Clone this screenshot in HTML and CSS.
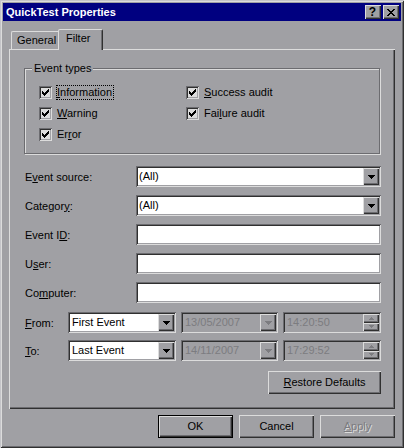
FILE: index.html
```html
<!DOCTYPE html>
<html>
<head>
<meta charset="utf-8">
<title>QuickTest Properties</title>
<link rel="stylesheet" href="styles.css">
</head>
<body>
<div class="window">
  <div class="titlebar">
    <span class="title">QuickTest Properties</span>
    <div class="tb-btns">
      <span class="tbtn help">?</span>
      <span class="tbtn close"><svg width="8" height="7" viewBox="0 0 8 7" shape-rendering="crispEdges"><path d="M0 0h2v1h-2z M6 0h2v1h-2z M1 1h2v1h-2z M5 1h2v1h-2z M2 2h4v1h-4z M3 3h2v1h-2z M2 4h4v1h-4z M1 5h2v1h-2z M5 5h2v1h-2z M0 6h2v1h-2z M6 6h2v1h-2z" fill="#000"/></svg></span>
    </div>
  </div>

  <div class="tabs">
    <div class="tab">General</div>
    <div class="tab active">Filter</div>
  </div>

  <div class="panel">
    <div class="group">
      <span class="legend">Event types</span>
      <div class="checks">
        <div class="chk"><span class="box"><svg width="7" height="7" viewBox="0 0 7 7" shape-rendering="crispEdges"><path d="M0 2h1v3h-1z M1 3h1v3h-1z M2 4h1v3h-1z M3 3h1v3h-1z M4 2h1v3h-1z M5 1h1v3h-1z M6 0h1v3h-1z" fill="#000"/></svg></span><span class="lbl focus"><u>I</u>nformation</span></div>
        <div class="chk"><span class="box"><svg width="7" height="7" viewBox="0 0 7 7" shape-rendering="crispEdges"><path d="M0 2h1v3h-1z M1 3h1v3h-1z M2 4h1v3h-1z M3 3h1v3h-1z M4 2h1v3h-1z M5 1h1v3h-1z M6 0h1v3h-1z" fill="#000"/></svg></span><span class="lbl"><u>S</u>uccess audit</span></div>
        <div class="chk"><span class="box"><svg width="7" height="7" viewBox="0 0 7 7" shape-rendering="crispEdges"><path d="M0 2h1v3h-1z M1 3h1v3h-1z M2 4h1v3h-1z M3 3h1v3h-1z M4 2h1v3h-1z M5 1h1v3h-1z M6 0h1v3h-1z" fill="#000"/></svg></span><span class="lbl"><u>W</u>arning</span></div>
        <div class="chk"><span class="box"><svg width="7" height="7" viewBox="0 0 7 7" shape-rendering="crispEdges"><path d="M0 2h1v3h-1z M1 3h1v3h-1z M2 4h1v3h-1z M3 3h1v3h-1z M4 2h1v3h-1z M5 1h1v3h-1z M6 0h1v3h-1z" fill="#000"/></svg></span><span class="lbl">Fai<u>l</u>ure audit</span></div>
        <div class="chk"><span class="box"><svg width="7" height="7" viewBox="0 0 7 7" shape-rendering="crispEdges"><path d="M0 2h1v3h-1z M1 3h1v3h-1z M2 4h1v3h-1z M3 3h1v3h-1z M4 2h1v3h-1z M5 1h1v3h-1z M6 0h1v3h-1z" fill="#000"/></svg></span><span class="lbl">Er<u>r</u>or</span></div>
      </div>
    </div>

    <div class="fields">
      <div class="row">
        <span class="flabel">E<u>v</u>ent source:</span>
        <div class="combo wide"><span class="val">(All)</span><span class="dd"><svg width="7" height="4" viewBox="0 0 7 4" shape-rendering="crispEdges"><path d="M0 0h7v1h-7z M1 1h5v1h-5z M2 2h3v1h-3z M3 3h1v1h-1z" fill="#000"/></svg></span></div>
      </div>
      <div class="row">
        <span class="flabel">Categor<u>y</u>:</span>
        <div class="combo wide"><span class="val">(All)</span><span class="dd"><svg width="7" height="4" viewBox="0 0 7 4" shape-rendering="crispEdges"><path d="M0 0h7v1h-7z M1 1h5v1h-5z M2 2h3v1h-3z M3 3h1v1h-1z" fill="#000"/></svg></span></div>
      </div>
      <div class="row">
        <span class="flabel">Event I<u>D</u>:</span>
        <div class="edit wide"></div>
      </div>
      <div class="row">
        <span class="flabel">U<u>s</u>er:</span>
        <div class="edit wide"></div>
      </div>
      <div class="row">
        <span class="flabel">Co<u>m</u>puter:</span>
        <div class="edit wide"></div>
      </div>
    </div>

    <div class="dates">
      <div class="drow">
        <span class="dlabel"><u>F</u>rom:</span>
        <div class="combo c-event"><span class="val">First Event</span><span class="dd"><svg width="7" height="4" viewBox="0 0 7 4" shape-rendering="crispEdges"><path d="M0 0h7v1h-7z M1 1h5v1h-5z M2 2h3v1h-3z M3 3h1v1h-1z" fill="#000"/></svg></span></div>
        <div class="combo disabled c-date"><span class="val">13/05/2007</span><span class="dd"><svg width="7" height="4" viewBox="0 0 7 4" shape-rendering="crispEdges"><path d="M0 0h7v1h-7z M1 1h5v1h-5z M2 2h3v1h-3z M3 3h1v1h-1z" fill="#7c7c80"/></svg></span></div>
        <div class="spin disabled c-time"><span class="val">14:20:50</span><span class="spinbtns"><span class="sb"><svg width="5" height="3" viewBox="0 0 5 3" shape-rendering="crispEdges"><path d="M2 0h1v1h-1z M1 1h3v1h-3z M0 2h5v1h-5z" fill="#7c7c80"/></svg></span><span class="sb"><svg width="5" height="3" viewBox="0 0 5 3" shape-rendering="crispEdges"><path d="M0 0h5v1h-5z M1 1h3v1h-3z M2 2h1v1h-1z" fill="#7c7c80"/></svg></span></span></div>
      </div>
      <div class="drow">
        <span class="dlabel"><u>T</u>o:</span>
        <div class="combo c-event"><span class="val">Last Event</span><span class="dd"><svg width="7" height="4" viewBox="0 0 7 4" shape-rendering="crispEdges"><path d="M0 0h7v1h-7z M1 1h5v1h-5z M2 2h3v1h-3z M3 3h1v1h-1z" fill="#000"/></svg></span></div>
        <div class="combo disabled c-date"><span class="val">14/11/2007</span><span class="dd"><svg width="7" height="4" viewBox="0 0 7 4" shape-rendering="crispEdges"><path d="M0 0h7v1h-7z M1 1h5v1h-5z M2 2h3v1h-3z M3 3h1v1h-1z" fill="#7c7c80"/></svg></span></div>
        <div class="spin disabled c-time"><span class="val">17:29:52</span><span class="spinbtns"><span class="sb"><svg width="5" height="3" viewBox="0 0 5 3" shape-rendering="crispEdges"><path d="M2 0h1v1h-1z M1 1h3v1h-3z M0 2h5v1h-5z" fill="#7c7c80"/></svg></span><span class="sb"><svg width="5" height="3" viewBox="0 0 5 3" shape-rendering="crispEdges"><path d="M0 0h5v1h-5z M1 1h3v1h-3z M2 2h1v1h-1z" fill="#7c7c80"/></svg></span></span></div>
      </div>
    </div>

    <div class="restore">
      <span class="btn restore-btn"><u>R</u>estore Defaults</span>
    </div>
  </div>

  <div class="buttons">
    <span class="btn default">OK</span>
    <span class="btn">Cancel</span>
    <span class="btn disabled-btn"><u>A</u>pply</span>
  </div>
</div>
</body>
</html>
```

FILE: styles.css
```css
:root {
  --face: #a0a0a4;
  --hi: #dcdcdc;
  --light: #c4c4c8;
  --sh: #6c6c70;
  --dk: #303030;
  --gray-text: #7c7c80;
}

* { box-sizing: border-box; }

html, body {
  margin: 0;
  padding: 0;
  background: var(--face);
}

body {
  font-family: "Liberation Sans", Arial, sans-serif;
  font-size: 11px;
  color: #000;
}

u { text-underline-offset: 1px; }

.window {
  width: 404px;
  height: 448px;
  padding: 3px;
  background: var(--face);
  box-shadow:
    inset 1px 1px var(--light),
    inset -1px -1px var(--dk),
    inset 2px 2px var(--hi),
    inset -2px -2px var(--sh);
  display: flex;
  flex-direction: column;
}

/* title bar */
.titlebar {
  height: 18px;
  background: #000080;
  display: flex;
  align-items: center;
  justify-content: space-between;
  padding: 0 2px 0 3px;
}
.title {
  color: #fff;
  font-weight: bold;
  font-size: 11px;
  line-height: 18px;
}
.tb-btns {
  display: flex;
  gap: 2px;
}
.tbtn {
  width: 16px;
  height: 14px;
  background: var(--face);
  box-shadow:
    inset 1px 1px var(--hi),
    inset -1px -1px var(--dk),
    inset -2px -2px var(--sh);
  display: flex;
  align-items: center;
  justify-content: center;
}
.tbtn.help {
  font-weight: bold;
  font-size: 12px;
  line-height: 14px;
  padding-right: 1px;
}
.tbtn.close svg { display: block; margin-left: -1px; }

/* tabs */
.tabs {
  margin: 8px 0 0 8px;
  display: flex;
  align-items: flex-end;
  height: 20px;
}
.tab {
  height: 18px;
  width: 47px;
  border: 1px solid;
  border-color: var(--hi) transparent transparent var(--hi);
  border-bottom: none;
  border-right: none;
  border-radius: 2px 0 0 0;
  padding-left: 5px;
  line-height: 17px;
  font-size: 11px;
}
.tab.active {
  width: 45px;
  height: 21px;
  margin-bottom: -1px;
  background: var(--face);
  border-color: var(--hi) var(--dk) transparent var(--hi);
  border-right: 1px solid var(--dk);
  border-radius: 2px 2px 0 0;
  box-shadow: inset -1px 0 var(--sh);
  position: relative;
  z-index: 1;
  padding-left: 7px;
  line-height: 17px;
}

/* panel */
.panel {
  margin: 0 6px 0 6px;
  height: 360px;
  padding: 19px 14px 0 15px;
  box-shadow:
    inset 1px 1px var(--hi),
    inset -1px -1px var(--dk),
    inset -2px -2px var(--sh);
  display: flex;
  flex-direction: column;
}

.group {
  position: relative;
  height: 86px;
  width: 356px;
  border: 1px solid var(--sh);
  box-shadow: inset 1px 1px var(--hi), 1px 1px var(--hi);
}
.legend {
  position: absolute;
  top: -7px;
  left: 7px;
  padding: 0 2px;
  background: var(--face);
  line-height: 13px;
}
.checks {
  display: grid;
  grid-template-columns: 147px auto;
  row-gap: 6px;
  padding: 16px 0 0 14px;
}
.chk {
  display: flex;
  align-items: center;
  height: 15px;
  gap: 4px;
}
.box {
  width: 13px;
  height: 13px;
  flex: none;
  background: var(--hi);
  box-shadow:
    inset 1px 1px var(--sh),
    inset -1px -1px var(--hi),
    inset 2px 2px var(--dk),
    inset -2px -2px var(--face);
  display: flex;
  align-items: center;
  justify-content: center;
}
.box svg { display: block; }
.lbl {
  border: 1px solid transparent;
  line-height: 13px;
  padding-right: 1px;
}
.lbl.focus { border: 1px dotted #000; }

/* fields */
.fields {
  margin-top: 12px;
  display: flex;
  flex-direction: column;
  gap: 8px;
}
.row {
  display: flex;
  align-items: center;
  height: 21px;
}
.flabel {
  width: 112px;
  padding-left: 1px;
  flex: none;
}
.wide { width: 245px; }

.edit, .combo, .spin {
  height: 21px;
  background: #fff;
  box-shadow:
    inset 1px 1px var(--sh),
    inset -1px -1px var(--hi),
    inset 2px 2px var(--dk),
    inset -2px -2px var(--face);
  padding: 2px;
  display: flex;
  align-items: center;
}
.val {
  flex: 1;
  padding-left: 1px;
  line-height: 17px;
  white-space: nowrap;
  overflow: hidden;
}
.dd {
  width: 16px;
  height: 17px;
  flex: none;
  background: var(--face);
  box-shadow:
    inset 1px 1px var(--hi),
    inset -1px -1px var(--dk),
    inset -2px -2px var(--sh);
  display: flex;
  align-items: center;
  justify-content: center;
}
.dd svg { display: block; margin-top: 1px; }

.disabled { background: var(--face); }
.disabled .val { color: var(--gray-text); padding-left: 2px; }

/* dates */
.dates {
  margin-top: 9px;
  display: flex;
  flex-direction: column;
  gap: 7px;
}
.drow {
  display: flex;
  align-items: center;
  height: 21px;
  gap: 5px;
}
.dlabel {
  width: 39px;
  padding-left: 1px;
  flex: none;
}
.c-event { width: 108px; }
.c-event .val { padding-left: 2px; }
.c-date { width: 97px; }
.c-time { width: 98px; }

.spinbtns {
  width: 16px;
  height: 17px;
  flex: none;
  display: flex;
  flex-direction: column;
}
.sb {
  flex: 1;
  background: var(--face);
  box-shadow:
    inset 1px 1px var(--hi),
    inset -1px -1px var(--dk),
    inset -2px -2px var(--sh);
  display: flex;
  align-items: center;
  justify-content: center;
}
.sb svg { display: block; }

/* buttons */
.restore {
  margin-top: 10px;
  display: flex;
  justify-content: flex-end;
  width: 357px;
}
.btn {
  height: 23px;
  width: 75px;
  background: var(--face);
  box-shadow:
    inset 1px 1px var(--hi),
    inset -1px -1px var(--dk),
    inset -2px -2px var(--sh);
  display: flex;
  align-items: center;
  justify-content: center;
  line-height: 13px;
}
.restore-btn { width: 113px; }
.btn.default {
  box-shadow:
    inset 0 0 0 1px #000,
    inset 2px 2px var(--hi),
    inset -2px -2px var(--dk),
    inset -3px -3px var(--sh);
}
.disabled-btn {
  color: var(--gray-text);
  text-shadow: 1px 1px var(--hi);
}

.buttons {
  margin: 6px 6px 0 0;
  display: flex;
  justify-content: flex-end;
  gap: 6px;
}
```
